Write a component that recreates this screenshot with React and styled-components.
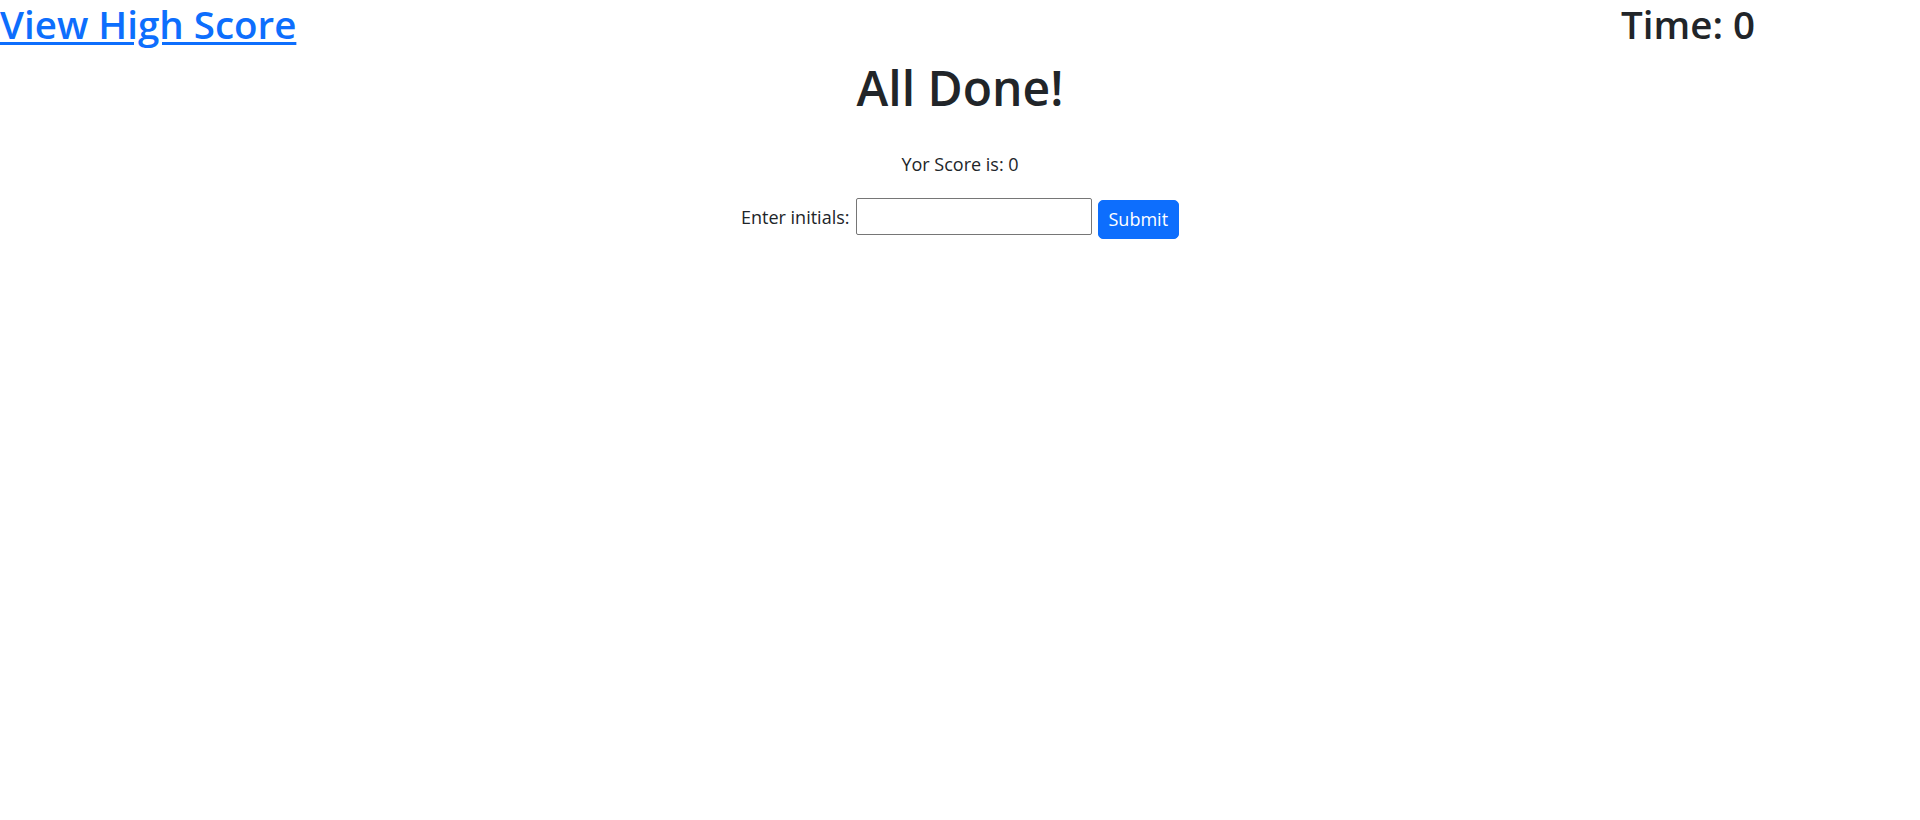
import styled, { createGlobalStyle } from "styled-components";

const GlobalStyle = createGlobalStyle`
  body {
    margin: 0;
    font-family: "Open Sans", "Noto Sans", sans-serif;
    font-size: 18px;
    line-height: 1.5;
    color: #212529;
    background: #fff;
  }
`;

// Horní lišta s odkazem a časem
const Header = styled.header`
  display: flex;
  justify-content: space-between;
  align-items: flex-start;
  padding-right: 165px;
`;

const HeaderText = styled.h1`
  margin: 0;
  font-size: 38.5px;
  font-weight: 600;
  line-height: 48px;
`;

const HighScoreLink = styled.a`
  color: #0d6efd;
  text-decoration: underline;
  text-underline-offset: 3px;
  cursor: pointer;
`;

const Main = styled.main`
  display: flex;
  flex-direction: column;
  align-items: center;
`;

const Title = styled.h1`
  margin: 10px 0 34px;
  font-size: 48px;
  font-weight: 600;
  line-height: 59px;
`;

const Score = styled.p`
  margin: 0 0 20px;
`;

const Form = styled.form`
  display: flex;
  align-items: flex-start;
  gap: 6px;
`;

const Label = styled.label`
  margin-top: 6px;
`;

const Input = styled.input`
  width: 236px;
  height: 37px;
  box-sizing: border-box;
  border: 1px solid #767676;
  border-radius: 2px;
  font: inherit;
  padding: 1px 2px;
`;

const SubmitButton = styled.button`
  box-sizing: border-box;
  padding: 5px 10px;
  margin-top: 2px;
  border: 1px solid #0d6efd;
  border-radius: 5px;
  background-color: #0d6efd;
  color: #fff;
  font: inherit;
  cursor: pointer;

  &:hover {
    background-color: #0b5ed7;
  }
`;

export default function App() {
  return (
    <>
      <GlobalStyle />
      <Header>
        <HeaderText>
          <HighScoreLink href="#">View High Score</HighScoreLink>
        </HeaderText>
        <HeaderText>Time: 0</HeaderText>
      </Header>
      <Main>
        <Title>All Done!</Title>
        <Score>Yor Score is: 0</Score>
        <Form onSubmit={(e) => e.preventDefault()}>
          <Label htmlFor="initials">Enter initials:</Label>
          <Input id="initials" type="text" />
          <SubmitButton type="submit">Submit</SubmitButton>
        </Form>
      </Main>
    </>
  );
}
